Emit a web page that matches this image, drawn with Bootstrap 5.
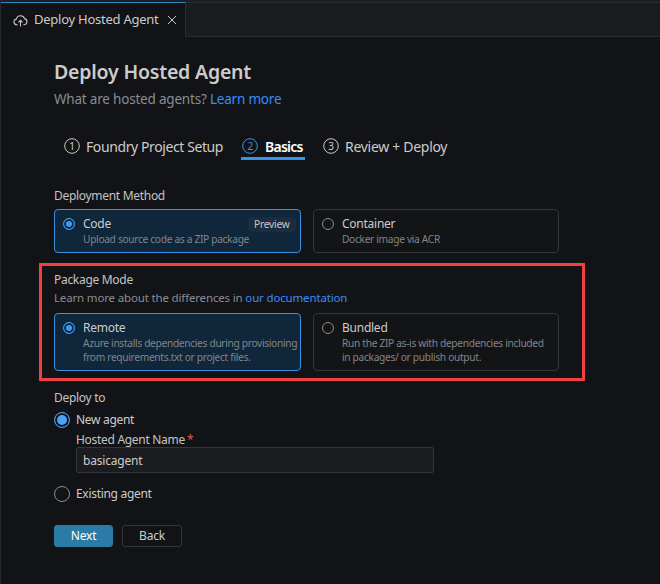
<!DOCTYPE html>
<html lang="en">
<head>
<meta charset="UTF-8">
<meta name="viewport" content="width=device-width, initial-scale=1.0">
<title>Deploy Hosted Agent</title>
<link href="https://cdn.jsdelivr.net/npm/bootstrap@5.3.3/dist/css/bootstrap.min.css" rel="stylesheet">
<style>
html, body { height: 100%; }
body { background: #111316; color: #ccc; font-family: "Noto Sans", "Open Sans", sans-serif; font-size: 13px; overflow: hidden; border-left: 1px solid #25272a; }
a { color: #3b8cff; text-decoration: none; }
.tabstrip { padding-top: 2px; background: #1c1e21; }
.tabbar { height: 35px; background: #1a1c1f; border-top: 1px solid #2b2d30; border-bottom: 1px solid #2b2d30; }
.tabitem { width: 185px; height: 35px; margin-top: -1px; padding-left: 12px; background: #111316; border-top: 1px solid #2b8cc4; border-right: 1px solid #2b2d30; font-size: 13px; }
.tabitem span { margin: 0 8px 0 6px; letter-spacing: -.25px; }
.pagebody { padding: 21px 0 0 53px; width: 558px; }
.pagetitle { font-size: 19.5px; font-weight: 600; line-height: 28px; margin: 0; color: #ccc; letter-spacing: -.2px; }
.subtitle { font-size: 13.5px; line-height: 20px; margin: 3px 0 0; color: #8a8d91; letter-spacing: -.2px; }
.steps { margin: 23px 0 0 10px; height: 28px; font-size: 14px; letter-spacing: -.4px; }
.stepitem { height: 28px; gap: 6px; }
.stepitem svg { flex: none; }
.stepitem.current { color: #fff; font-weight: 600; height: 28px; border-bottom: 3px solid #3794e8; padding: 3px 2px 0 1px; margin: 0 18px; width: 64px; gap: 7px; letter-spacing: -.8px; }
.reviewstep { letter-spacing: -.3px; }
.fieldlabel { font-size: 12px; line-height: 16px; color: #c4c4c4; letter-spacing: -.3px; }
.methodlabel { margin: 28px 0 5px; }
.learnline { font-size: 11.5px; margin: 2px 0 7px; color: #8a8d91; letter-spacing: -.16px; }
.optgrid { display: grid; grid-template-columns: 247px 246px; gap: 12px; }
.optcard { position: relative; border: 1px solid #33363a; border-radius: 4px; padding: 5px 8px 6px; gap: 8px; background: #131416; }
.optcard.picked { border-color: #3a8fe0; background: #10263a; }
.opttitle { font-size: 12px; line-height: 17px; color: #ccc; letter-spacing: -.25px; }
.optdesc { font-size: 10.2px; line-height: 14px; color: #818589; letter-spacing: -.32px; white-space: nowrap; }
.radiomark { flex: none; width: 12px; height: 12px; margin-top: 3px; border-radius: 50%; border: 1px solid #8a8a8a; }
.picked .radiomark { border-color: #3d9bf0; background: #3d9bf0; box-shadow: inset 0 0 0 2px #10263a; }
.previewtag { position: absolute; top: 7px; right: 4px; padding: 0 6px; width: 48px; line-height: 15px; height: 15px; font-size: 10.2px; background: #1a2c3d; color: #c8c8c8; border-radius: 4px; letter-spacing: -.2px; }
.redbox { border: 3px solid #f04040; width: 546px; height: 118px; margin: 10px 0 0 -15px; padding: 6px 0 0 12px; }
.deploylabel { margin: 9px 0 6px; }
.agentrow { gap: 6px; font-size: 12px; line-height: 16px; letter-spacing: -.3px; }
.existingrow { margin-top: 13px; }
.namefield { margin: 4px 0 0 22px; }
.namefield .fieldlabel { line-height: 15px; }
.bigradio { flex: none; width: 16px; height: 16px; border-radius: 50%; border: 1px solid #8f8f8f; }
.bigradio.on { border-color: #3d9bf0; background: #4aa3f5; box-shadow: inset 0 0 0 2px #111316; }
.agentname { width: 358px; height: 26px; padding: 0 6px; font-size: 12px; background: #1a1c1f; color: #ccc; border: 1px solid #33363a; border-radius: 2px; letter-spacing: -.2px; }
.agentname:focus { outline: none; }
.reqmark { color: #e0604f; margin-left: 2px; }
.btnrow { gap: 9px; margin-top: 23px; }
.btn.nextbtn, .btn.backbtn { height: 22px; padding: 0; font-size: 12px; line-height: 20px; border-radius: 3px; letter-spacing: -.2px; }
.btn.nextbtn { width: 59px; background: #2a7ba6; border: 1px solid #2a7ba6; color: #fff; }
.btn.backbtn { width: 60px; background: transparent; border: 1px solid #33363a; color: #ccc; }
</style>
</head>
<body>

<div class="tabstrip">
  <div class="tabbar">
    <div class="tabitem d-flex align-items-center">
      <svg width="15" height="15" viewBox="0 0 16 16" fill="none" stroke="#c8c8c8" stroke-width="1.1"><path d="M5 12.5H4a3 3 0 0 1-.4-5.97A4.5 4.5 0 0 1 12.3 6 3.3 3.3 0 0 1 12 12.5h-1"/><path d="M8 14.5V8M5.8 10 8 7.8 10.2 10"/></svg>
      <span>Deploy Hosted Agent</span>
      <svg width="10" height="10" viewBox="0 0 10 10" stroke="#c8c8c8" stroke-width="1"><path d="M1 1l8 8M9 1l-8 8"/></svg>
    </div>
  </div>
</div>

<div class="pagebody">
  <h1 class="pagetitle">Deploy Hosted Agent</h1>
  <p class="subtitle">What are hosted agents? <a href="#">Learn more</a></p>

  <div class="steps d-flex align-items-start">
    <div class="stepitem d-flex align-items-center">
      <svg width="16" height="16" viewBox="0 0 16 16"><circle cx="8" cy="8" r="7.3" fill="none" stroke="#ccc"/><text x="8" y="11.5" font-size="10" text-anchor="middle" fill="#ccc">1</text></svg>
      <span>Foundry Project Setup</span>
    </div>
    <div class="stepitem current d-flex align-items-center">
      <svg width="16" height="16" viewBox="0 0 16 16"><circle cx="8" cy="8" r="7.3" fill="none" stroke="#3794e8"/><text x="8" y="11.5" font-size="10" font-weight="400" text-anchor="middle" fill="#3794e8">2</text></svg>
      <span>Basics</span>
    </div>
    <div class="stepitem reviewstep d-flex align-items-center">
      <svg width="16" height="16" viewBox="0 0 16 16"><circle cx="8" cy="8" r="7.3" fill="none" stroke="#ccc"/><text x="8" y="11.5" font-size="10" text-anchor="middle" fill="#ccc">3</text></svg>
      <span>Review + Deploy</span>
    </div>
  </div>

  <div class="fieldlabel methodlabel">Deployment Method</div>
  <div class="optgrid">
    <div class="optcard picked d-flex">
      <div class="radiomark"></div>
      <div>
        <div class="opttitle">Code</div>
        <div class="optdesc">Upload source code as a ZIP package</div>
      </div>
      <div class="previewtag">Preview</div>
    </div>
    <div class="optcard d-flex">
      <div class="radiomark"></div>
      <div>
        <div class="opttitle">Container</div>
        <div class="optdesc">Docker image via ACR</div>
      </div>
    </div>
  </div>

  <div class="redbox">
    <div class="fieldlabel">Package Mode</div>
    <div class="fieldlabel learnline">Learn more about the differences in <a href="#">our documentation</a></div>
    <div class="optgrid">
      <div class="optcard picked d-flex">
        <div class="radiomark"></div>
        <div>
          <div class="opttitle">Remote</div>
          <div class="optdesc">Azure installs dependencies during provisioning<br>from requirements.txt or project files.</div>
        </div>
      </div>
      <div class="optcard d-flex">
        <div class="radiomark"></div>
        <div>
          <div class="opttitle">Bundled</div>
          <div class="optdesc">Run the ZIP as-is with dependencies included<br>in packages/ or publish output.</div>
        </div>
      </div>
    </div>
  </div>

  <div class="fieldlabel deploylabel">Deploy to</div>
  <div class="agentrow d-flex align-items-center"><div class="bigradio on"></div><span>New agent</span></div>
  <div class="namefield">
    <div class="fieldlabel"><span>Hosted Agent Name</span><span class="reqmark">*</span></div>
    <input class="agentname d-block" type="text" value="basicagent">
  </div>
  <div class="agentrow existingrow d-flex align-items-center"><div class="bigradio"></div><span>Existing agent</span></div>

  <div class="btnrow d-flex">
    <button type="button" class="btn nextbtn">Next</button>
    <button type="button" class="btn backbtn">Back</button>
  </div>
</div>

<script src="https://cdn.jsdelivr.net/npm/bootstrap@5.3.3/dist/js/bootstrap.bundle.min.js"></script>
</body>
</html>
